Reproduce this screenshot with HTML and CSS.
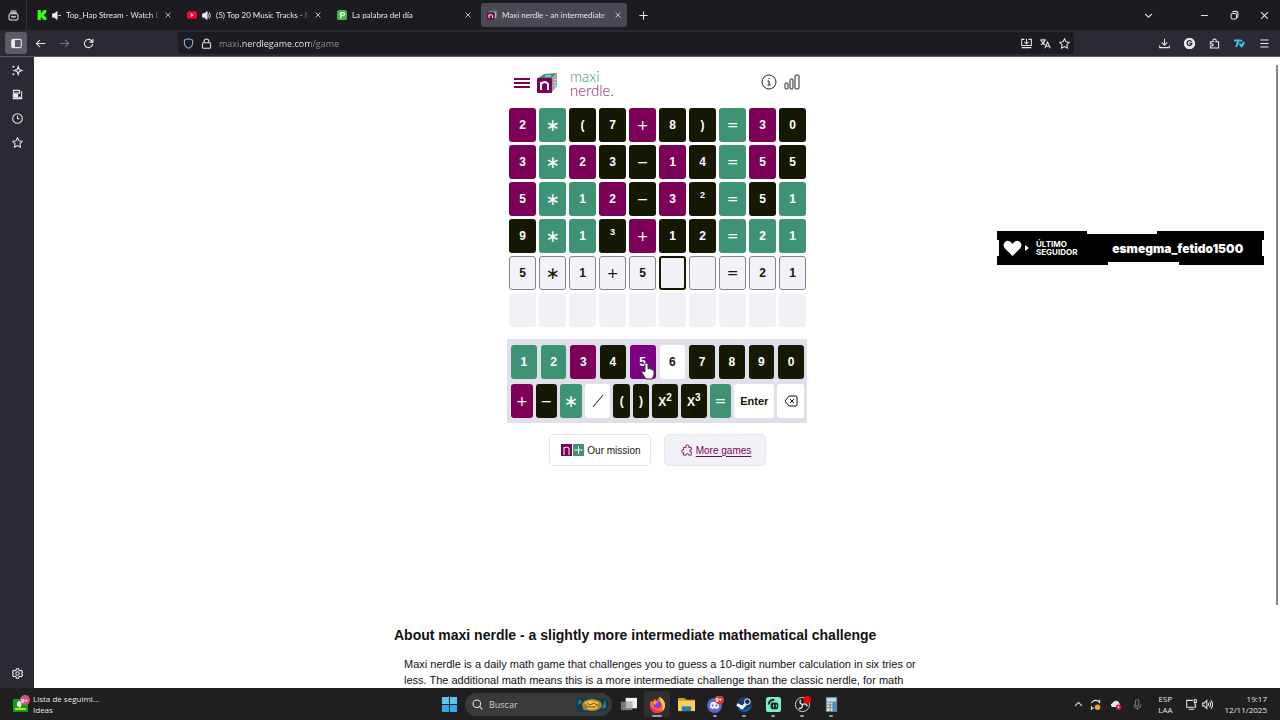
FILE: index.html
```html
<!DOCTYPE html>
<html lang="en">

<head>
    <meta charset="UTF-8">
    <meta name="viewport" content="width=device-width, initial-scale=1.0">
    <title>Maxi nerdle - an intermediate math game</title>
    <link rel="stylesheet" href="styles.css">
</head>

<body>
    <!-- tab strip -->
    <div class="tabbar">
        <button class="icon-btn view-btn" aria-label="Recent browsing">
            <svg class="ico" viewBox="0 0 16 16"><path d="M4 1.500h8M3 4h10" /><rect x="1.500" y="5.500" width="13" height="9" rx="2" /><path d="M5.500 8.500v1.500h5V8.500" /></svg>
        </button>
        <div class="tab">
            <svg class="favicon" viewBox="0 0 16 16"><path fill="#3dfc1a" d="M1 0h5v4h2V2h2V0h5v5h-2v2h-2v2h2v2h2v5h-5v-2H8v-2H6v4H1z" /></svg>
            <svg class="ico sound" viewBox="0 0 16 16"><path class="solid" d="M1 5h3l5-4v14l-5-4H1z" /><path d="M11 8h5" /></svg>
            <span class="tab-title">Top_Hap Stream - Watch Li</span>
            <button class="close" aria-label="Close tab"><svg class="ico" viewBox="0 0 16 16"><path d="M3 3l10 10M13 3L3 13" /></svg></button>
        </div>
        <div class="tab">
            <svg class="favicon" viewBox="0 0 16 16"><rect y="2" width="16" height="12" rx="3" fill="#f03" /><path fill="#fff" d="M6 5l5 3-5 3z" /></svg>
            <svg class="ico sound" viewBox="0 0 16 16"><path class="solid" d="M1 5h3l5-4v14l-5-4H1z" /><path d="M11 5q2 3 0 6M13 2q4 6 0 12" /></svg>
            <span class="tab-title">(5) Top 20 Music Tracks - M</span>
            <button class="close" aria-label="Close tab"><svg class="ico" viewBox="0 0 16 16"><path d="M3 3l10 10M13 3L3 13" /></svg></button>
        </div>
        <div class="tab">
            <svg class="favicon" viewBox="0 0 16 16"><rect width="16" height="16" rx="3" fill="#43b649" /><path d="M6 13V4h3q3 0 3 2.500T9 9H6" fill="none" stroke="#fff" stroke-width="2" /></svg>
            <span class="tab-title">La palabra del día</span>
            <button class="close" aria-label="Close tab"><svg class="ico" viewBox="0 0 16 16"><path d="M3 3l10 10M13 3L3 13" /></svg></button>
        </div>
        <div class="tab active">
            <svg class="favicon" viewBox="0 0 20 20"><path fill="#3f9375" d="M1 5l5-4h13l-4 4z" /><path fill="#a9a9a9" d="M15 5l4-4v13l-4 5z" /><rect y="5" width="15" height="14" rx="1" fill="#7c0058" /><path class="cube-n" d="M4 16V9M4 11q4-4 7 0v5" /></svg>
            <span class="tab-title">Maxi nerdle - an intermediate m</span>
            <button class="close" aria-label="Close tab"><svg class="ico" viewBox="0 0 16 16"><path d="M3 3l10 10M13 3L3 13" /></svg></button>
        </div>
        <button class="icon-btn new-tab" aria-label="New tab"><svg class="ico" viewBox="0 0 16 16"><path d="M8 2v12M2 8h12" /></svg></button>
        <div class="window-btns">
            <button class="icon-btn list-tabs" aria-label="List all tabs"><svg class="ico" viewBox="0 0 16 16"><path d="M3 5.500l5 5 5-5" /></svg></button>
            <button class="icon-btn" aria-label="Minimize"><svg class="ico" viewBox="0 0 16 16"><path d="M3 8h10" /></svg></button>
            <button class="icon-btn" aria-label="Restore"><svg class="ico" viewBox="0 0 16 16"><rect x="3" y="5" width="8" height="8" rx="2" /><path d="M5 3q1-1 3-1h2q3 0 3 3v3q0 2-1 3" /></svg></button>
            <button class="icon-btn" aria-label="Close"><svg class="ico" viewBox="0 0 16 16"><path d="M3 3l10 10M13 3L3 13" /></svg></button>
        </div>
    </div>

    <!-- navigation -->
    <div class="toolbar">
        <button class="icon-btn side-toggle" aria-label="Sidebar"><svg class="ico" viewBox="0 0 16 16"><rect x="1" y="2" width="14" height="12" rx="2" /><path class="solid" d="M2 3h3v10H2z" /></svg></button>
        <button class="icon-btn" aria-label="Back"><svg class="ico" viewBox="0 0 16 16"><path d="M15 8H2M7 3L2 8l5 5" /></svg></button>
        <button class="icon-btn dim" aria-label="Forward"><svg class="ico" viewBox="0 0 16 16"><path d="M1 8h13M9 3l5 5-5 5" /></svg></button>
        <button class="icon-btn" aria-label="Reload"><svg class="ico" viewBox="0 0 16 16"><path d="M14 8.500A6 6 0 1 1 12 3.500L14 6M14.500 1v5h-5" /></svg></button>
        <div class="urlbar">
            <svg class="ico shield" viewBox="0 0 16 16"><path d="M8 1l6 2v4q0 6-6 8-6-2-6-8V3z" /></svg>
            <svg class="ico" viewBox="0 0 16 16"><rect x="2" y="7" width="12" height="8" rx="2" /><path d="M4.500 7V5a3.500 3.500 0 0 1 7 0v2" /></svg>
            <input class="url" type="text" aria-label="Address" value="maxi.nerdlegame.com/game">
            <button class="icon-btn" aria-label="Install page"><svg class="ico" viewBox="0 0 16 16"><path d="M5 2H1v9h14V2h-4M8 1v7M5 5.500l3 3 3-3M1 14h14" /></svg></button>
            <button class="icon-btn" aria-label="Translate"><svg class="ico" viewBox="0 0 16 16"><path d="M0 3h9M4.500 1v2M7 3Q6 8 1 10M2 4q1 4 6 6M7 15l4-9 4 9M8.500 12h5" /></svg></button>
            <button class="icon-btn" aria-label="Bookmark"><svg class="ico" viewBox="0 0 16 16"><path d="M8 1l2.200 4.600 4.800.700-3.500 3.500.900 5L8 12.400 3.600 14.800l.900-5L1 6.300l4.800-.700z" /></svg></button>
        </div>
        <div class="extensions">
            <button class="icon-btn" aria-label="Downloads"><svg class="ico" viewBox="0 0 16 16"><path d="M8 1v9M4 6.500l4 4 4-4M1 11v3h14v-3" /></svg></button>
            <button class="icon-btn" aria-label="Account"><svg class="ico" viewBox="0 0 16 16"><circle class="solid" cx="8" cy="8" r="7.500" /><path class="cut" d="M11 5.500A3.500 3.500 0 1 0 11.500 8H8" /></svg></button>
            <button class="icon-btn" aria-label="Extensions"><svg class="ico" viewBox="0 0 16 16"><path d="M2 14.500v-3q4 .500 4-1.500T2 8.500V5.500h4.500q-2-4 1.500-4t2 4h4v9z" /></svg></button>
            <button class="icon-btn seven" aria-label="7TV"><svg class="ico" viewBox="0 0 16 16"><path d="M0 3.500h7L3 13M8 8l3 4 4-6M9 4h3" /></svg></button>
            <button class="icon-btn" aria-label="Menu"><svg class="ico" viewBox="0 0 16 16"><path d="M2 3h12M2 8h12M2 13h12" /></svg></button>
        </div>
    </div>

    <div class="middle">
        <nav class="sidebar">
            <button class="icon-btn" aria-label="AI chat"><svg class="ico" viewBox="0 0 16 16"><path d="M9 2l1.500 4.500L15 8l-4.500 1.500L9 14 7.500 9.500 3 8l4.500-1.500zM2 1v3M.500 2.500h3M2 12v3M.500 13.500h3" /></svg></button>
            <button class="icon-btn" aria-label="Synced tabs"><svg class="ico" viewBox="0 0 16 16"><path d="M2 2h9v4H2zM13 4h1v8H2V8M1 14h14" /><path class="solid" d="M2 8h6v3H2z" /></svg></button>
            <button class="icon-btn" aria-label="History"><svg class="ico" viewBox="0 0 16 16"><circle cx="8" cy="8" r="7" /><path d="M8 4v4.500h3" /></svg></button>
            <button class="icon-btn" aria-label="Bookmarks"><svg class="ico" viewBox="0 0 16 16"><path d="M8 1l2.200 4.600 4.800.700-3.500 3.500.900 5L8 12.400 3.600 14.800l.900-5L1 6.300l4.800-.700z" /></svg></button>
            <button class="icon-btn settings" aria-label="Settings"><svg class="ico" viewBox="0 0 16 16"><path d="M6.500 1h3l.500 2 2 1 2-.500 1.500 2.500L14 8l1.500 2-1.500 2.500-2-.500-2 1-.500 2h-3L6 13l-2-1-2 .500L.500 10 2 8 .500 6 2 3.500 4 4l2-1z" /><circle cx="8" cy="8" r="2.500" /></svg></button>
        </nav>

        <main class="page">
            <div class="game">
                <header class="game-header">
                    <button class="plain menu" aria-label="Menu"><svg viewBox="0 0 16 12"><path d="M0 2h16M0 6h16M0 10h16" /></svg></button>
                    <svg class="logo" viewBox="0 0 20 20"><path fill="#3f9375" d="M1 5l6-4 13-1-5 5z" /><path fill="#a3a5a0" d="M15 5l5-5v13l-5 6z" /><rect y="5" width="15" height="15" rx="1" fill="#7c0058" /><path class="cube-n" d="M4 17V9M4 11q4-4 7 0v6" /><path d="M8 3h6M17 7l2-1M17 10l2-1M17 13l2-1" stroke="#eee" /></svg>
                    <h1 class="brand"><span class="brand-top">maxi</span><span>nerdle.</span></h1>
                    <button class="plain info" aria-label="How to play"><svg viewBox="0 0 16 16"><circle cx="8" cy="8" r="7" /><path d="M8 7v4M8 4v1M6.500 7H8M6.500 11h3" /></svg></button>
                    <button class="plain stats" aria-label="Statistics"><svg viewBox="0 0 16 16"><rect x="1" y="9" width="3" height="6" rx="1" /><rect x="6" y="5" width="3" height="10" rx="1" /><rect x="11" y="1" width="4" height="14" rx="1" /></svg></button>
                </header>

                <!-- guesses -->
                <div class="board">
                    <div class="cell purple">2</div>
                    <div class="cell green op star">∗</div>
                    <div class="cell black">(</div>
                    <div class="cell black">7</div>
                    <div class="cell purple op">+</div>
                    <div class="cell black">8</div>
                    <div class="cell black">)</div>
                    <div class="cell green op">=</div>
                    <div class="cell purple">3</div>
                    <div class="cell black">0</div>

                    <div class="cell purple">3</div>
                    <div class="cell green op star">∗</div>
                    <div class="cell purple">2</div>
                    <div class="cell black">3</div>
                    <div class="cell black op">−</div>
                    <div class="cell purple">1</div>
                    <div class="cell black">4</div>
                    <div class="cell green op">=</div>
                    <div class="cell purple">5</div>
                    <div class="cell black">5</div>

                    <div class="cell purple">5</div>
                    <div class="cell green op star">∗</div>
                    <div class="cell green">1</div>
                    <div class="cell purple">2</div>
                    <div class="cell black op">−</div>
                    <div class="cell purple">3</div>
                    <div class="cell black power">2</div>
                    <div class="cell green op">=</div>
                    <div class="cell black">5</div>
                    <div class="cell green">1</div>

                    <div class="cell black">9</div>
                    <div class="cell green op star">∗</div>
                    <div class="cell green">1</div>
                    <div class="cell black power">3</div>
                    <div class="cell purple op">+</div>
                    <div class="cell black">1</div>
                    <div class="cell black">2</div>
                    <div class="cell green op">=</div>
                    <div class="cell green">2</div>
                    <div class="cell green">1</div>

                    <div class="cell typed">5</div>
                    <div class="cell typed op star">∗</div>
                    <div class="cell typed">1</div>
                    <div class="cell typed op">+</div>
                    <div class="cell typed">5</div>
                    <div class="cell typed current"></div>
                    <div class="cell typed"></div>
                    <div class="cell typed op">=</div>
                    <div class="cell typed">2</div>
                    <div class="cell typed">1</div>

                    <div class="cell"></div>
                    <div class="cell"></div>
                    <div class="cell"></div>
                    <div class="cell"></div>
                    <div class="cell"></div>
                    <div class="cell"></div>
                    <div class="cell"></div>
                    <div class="cell"></div>
                    <div class="cell"></div>
                    <div class="cell"></div>
                </div>

                <!-- keyboard -->
                <div class="keyboard">
                    <div class="keys digits">
                        <button class="key green">1</button>
                        <button class="key green">2</button>
                        <button class="key purple">3</button>
                        <button class="key black">4</button>
                        <button class="key purple hover">5<svg class="pointer" viewBox="0 0 14 18"><path d="M4 10V2q0-1 1-1t2 1v5q2-1 2 0 2-1 2 1 2-1 2 1v4l-2 4H5L1 11q-1-2 1-2z" /></svg></button>
                        <button class="key">6</button>
                        <button class="key black">7</button>
                        <button class="key black">8</button>
                        <button class="key black">9</button>
                        <button class="key black">0</button>
                    </div>
                    <div class="keys signs">
                        <button class="key purple op">+</button>
                        <button class="key black op">−</button>
                        <button class="key green op star">∗</button>
                        <button class="key" aria-label="/"><svg class="slash" viewBox="0 0 12 14"><path d="M1 13L11 1" /></svg></button>
                        <button class="key black">(</button>
                        <button class="key black">)</button>
                        <button class="key black"><span class="pow">X<sup>2</sup></span></button>
                        <button class="key black"><span class="pow">X<sup>3</sup></span></button>
                        <button class="key green op">=</button>
                        <button class="key enter">Enter</button>
                        <button class="key" aria-label="Delete"><svg class="backspace" viewBox="0 0 14 12"><path d="M5 1h7q1 0 1 1v8q0 1-1 1H5L1 6zM6 4l4 4M10 4L6 8" /></svg></button>
                    </div>
                </div>

                <div class="links">
                    <a href="#" class="link-btn"><svg class="mission" viewBox="0 0 23 12"><path fill="#7c0058" d="M0 0h11v12H0z" /><path fill="#3f9375" d="M12 0h11v12H12z" /><path d="M3 11V3M3 4q3-2 5 0v7M17.500 2v8M13.500 6h8" /></svg>Our mission</a>
                    <a href="#" class="link-btn more"><svg class="puzzle" viewBox="0 0 14 14"><path d="M3 4h3q-1-3 1.500-3T9 4h3v3q-2-1-2 1t2 1v4H9q0-2-1.500-2T6 13H3v-3q-2 1-2-1.500T3 7z" /></svg><span>More games</span></a>
                </div>
            </div>

            <section class="about">
                <h2>About maxi nerdle - a slightly more intermediate mathematical challenge</h2>
                <p>Maxi nerdle is a daily math game that challenges you to guess a 10-digit number calculation in six tries or less. The additional math means this is a more intermediate challenge than the classic nerdle, for math</p>
            </section>

            <!-- stream overlay -->
            <aside class="follower">
                <svg class="heart" viewBox="0 0 20 18"><path d="M10 17L2 9Q-1 5 2 2q4-3 8 2 4-5 8-2 3 3 0 7z" /></svg>
                <span class="arrow"></span>
                <span class="follower-label">ÚLTIMO<br>SEGUIDOR</span>
                <strong class="follower-name">esmegma_fetido1500</strong>
            </aside>
            <div class="scroll-thumb"></div>
        </main>
    </div>

    <!-- windows taskbar -->
    <footer class="taskbar">
        <button class="widget">
            <svg viewBox="0 0 18 18"><path fill="#119c1d" d="M0 4h15v13H0z" /><path fill="#f6fbe9" d="M4 11q-1-5 3-5 3 3 0 7z" /><path fill="#b9e713" d="M2 13h11v2H2z" /><circle cx="12" cy="5" r="5" fill="#d9527c" /><text x="8" y="8">9+</text></svg>
            <span class="widget-text"><b>Lista de seguimi...</b><span>Ideas</span></span>
        </button>
        <div class="apps">
            <button class="app" aria-label="Start"><svg viewBox="0 0 18 18"><path fill="#5cc8f2" d="M1 1h7.500v7.500H1zM9.500 1H17v7.500H9.500z" /><path fill="#35a9e8" d="M1 9.500h7.500V17H1zM9.500 9.500H17V17H9.500z" /></svg></button>
            <label class="search">
                <svg class="ico" viewBox="0 0 16 16"><circle cx="7" cy="7" r="5.500" /><path d="M11 11l4 4" /></svg>
                <input type="text" placeholder="Buscar" aria-label="Buscar">
                <svg class="art" viewBox="0 0 34 17"><path fill="#123c50" d="M3 2h28l3 6-3 8H3L0 8z" /><path fill="#2c8aa0" d="M4 3l3 3-4 3zM30 4l1 7-4 2zM7 13l3-2 1 4z" /><ellipse cx="17" cy="9" rx="10" ry="6" fill="#b48120" /><path fill="#efc544" d="M9 7q7-5 15 0l-3 2 2 3q-7 3-12 0l2-3z" /><path d="M12 7l3 2 4-2 3 2M11 11h10" stroke="#754b12" fill="none" /></svg>
            </label>
            <button class="app" aria-label="Task view"><svg viewBox="0 0 18 18"><path fill="#f1f1f1" d="M6 2h12v11H6z" /><path fill="#777" d="M1 6h12v9H1z" /><path fill="#b8b8b8" d="M6 6h7v7H6z" /></svg></button>
            <button class="app open focused" aria-label="Firefox"><svg viewBox="0 0 18 18"><path fill="#ff6a22" d="M2 5l2 1 2-3 2 2 3-4q6 3 6 9a8 8 0 0 1-16 0q0-3 1-5z" /><path fill="#ffc83a" d="M11 1q6 3 6 9 0 4-3 6 2-7-2-9z" /><path fill="#f42c62" d="M1 9q3 7 12 7-5 4-10 0-2-3-2-7z" /><circle cx="9" cy="9" r="4" fill="#813ce0" /><path fill="#ffb133" d="M5 6q3-1 5 1-4 0-3 3-2-1-2-4z" /></svg></button>
            <button class="app" aria-label="Explorer"><svg viewBox="0 0 18 18"><path fill="#d59b20" d="M0 2h7l2 2h9v12H0z" /><path fill="#fbd052" d="M0 5h18v11H0z" /><path fill="#237fba" d="M4 11h10v5H4z" /></svg></button>
            <button class="app open" aria-label="Discord"><svg viewBox="0 0 18 18"><circle cx="8" cy="10" r="8" fill="#5966df" /><path fill="#fff" d="M4 7q4-2 8 0l1 5-3 2-1-1H7l-1 1-3-2z" /><path fill="#5966df" d="M5 9h2v2H5zM9 9h2v2H9z" /><circle cx="13" cy="4" r="5" fill="#d83a46" /><text x="9" y="6">9+</text></svg></button>
            <button class="app open" aria-label="Steam"><svg viewBox="0 0 18 18"><circle cx="9" cy="9" r="8" fill="#173d6d" /><path fill="#135ca0" d="M2 13q7 3 15-3-2 7-8 7-5 0-7-4z" /><path d="M1 9l6 3 5-5" stroke="#fff" stroke-width="3" fill="none" /><circle cx="12" cy="6" r="3" fill="#183050" stroke="#fff" /><circle cx="6" cy="12" r="2" fill="#fff" /></svg></button>
            <button class="app open" aria-label="Streamlabs"><svg viewBox="0 0 18 18"><rect x="1" y="1" width="16" height="16" rx="3" fill="#7cf0c9" /><path d="M4 9q0-5 6-5" stroke="#122a24" stroke-width="2" fill="none" /><rect x="6" y="7" width="8" height="7" rx="2" fill="#122a24" /><path stroke="#7cf0c9" d="M9 9v3M12 9v3" /></svg></button>
            <button class="app open" aria-label="OBS"><svg viewBox="0 0 18 18"><circle cx="9" cy="9" r="7.500" fill="#222" stroke="#ddd" /><path d="M9 9Q5 8 7 4M9 9q4-2 5 2M9 9q0 5-4 4" stroke="#ddd" stroke-width="1.500" fill="none" /><circle cx="14" cy="4" r="4" fill="#ec0808" /></svg></button>
            <button class="app open" aria-label="Calculator"><svg viewBox="0 0 18 18"><path fill="#6f7f87" d="M3 1h12v16H3z" /><path fill="#a8e6f8" d="M4 2h10v4H4z" /><path fill="#e1e6e8" d="M4 7h3v2H4zM8 7h2v2H8zM4 10h3v2H4zM8 10h2v2H8zM4 13h3v3H4zM8 13h2v3H8z" /><path fill="#329bd8" d="M11 7h3v9h-3z" /></svg></button>
        </div>
        <div class="tray">
            <button class="icon-btn" aria-label="Hidden icons"><svg class="ico" viewBox="0 0 16 16"><path d="M3 10l5-5 5 5" /></svg></button>
            <svg class="ico" viewBox="0 0 16 16"><path d="M2 6q3-6 10-3l2 2V1M2 10v5l2-2h2" /><circle cx="11" cy="12" r="4" fill="#f5a623" stroke="none" /></svg>
            <svg class="ico" viewBox="0 0 16 16"><path class="solid" d="M2 11q-3-3 1-5 3-5 8-1l2 6z" /><circle cx="11" cy="12" r="4" fill="#d9143c" stroke="none" /><path d="M10 11l2 2M12 11l-2 2" /></svg>
            <svg class="ico dim" viewBox="0 0 16 16"><rect x="5" y="1" width="5" height="9" rx="2" /><path d="M3 8q0 5 5 5t5-5M8 13v3" /></svg>
            <span class="lang">ESP<br>LAA</span>
            <svg class="ico net" viewBox="0 0 16 16"><path d="M10 2H1v10h13V8M4 15h8M12 1h3v4h-3zM13 5v4" /></svg>
            <svg class="ico" viewBox="0 0 16 16"><path d="M1 6h2l4-4v12l-4-4H1zM9 6q1 2 0 4M11 4q3 4 0 8M13 2q5 6 0 12" /></svg>
            <span class="clock">19:17<br>12/11/2025</span>
        </div>
    </footer>
</body>

</html>
```

FILE: styles.css
```css
* {
    box-sizing: border-box;
    margin: 0;
    padding: 0;
}

body {
    display: flex;
    flex-direction: column;
    height: 100vh;
    overflow: hidden;
    background: #fff;
    font-family: "Liberation Sans", Arial, sans-serif;
}

button,
input {
    border: 0;
    background: none;
    font: inherit;
    color: inherit;
}

svg {
    display: block;
    flex: none;
}

/* browser chrome */
.tabbar,
.toolbar,
.sidebar,
.taskbar {
    color: #e8e8ee;
    font-family: "Open Sans", "Noto Sans", sans-serif;
    font-size: 9px;
}

.ico {
    width: 11px;
    height: 11px;
    fill: none;
    stroke: currentColor;
    stroke-width: 1.5;
}

.ico .solid {
    fill: currentColor;
}

.ico .cut {
    stroke: #2b2a33;
    stroke-width: 2;
}

.icon-btn {
    display: flex;
    flex: none;
    align-items: center;
    justify-content: center;
    width: 20px;
    height: 20px;
}

.dim {
    color: #777680;
}

.tabbar {
    display: flex;
    align-items: center;
    flex: none;
    gap: 4px;
    height: 30px;
    padding-right: 6px;
    background: #1c1b22;
}

.view-btn {
    width: 27px;
    height: 30px;
    border-right: 1px solid #34333d;
}

.tab {
    display: flex;
    align-items: center;
    gap: 5px;
    width: 146px;
    height: 24px;
    padding: 0 5px 0 6px;
    border-radius: 3px;
}

.tab.active {
    background: #4a4953;
}

.favicon {
    flex: none;
    width: 10px;
    height: 10px;
}

.sound {
    width: 9px;
    height: 9px;
}

.tab-title {
    flex: 1;
    overflow: hidden;
    white-space: nowrap;
    font-family: Lato, "Open Sans", sans-serif;
    font-size: 8px;
    line-height: 14px;
    -webkit-mask-image: linear-gradient(to left, transparent, #000 8px);
    mask-image: linear-gradient(to left, transparent, #000 8px);
}

.close .ico {
    width: 8px;
    height: 8px;
}

.new-tab {
    margin-left: 2px;
}

.window-btns {
    display: flex;
    gap: 10px;
    margin-left: auto;
}

.list-tabs {
    margin-right: 26px;
}

.toolbar {
    display: flex;
    align-items: center;
    flex: none;
    gap: 4px;
    height: 27px;
    padding: 0 6px 0 5px;
    background: #2b2a33;
    border-bottom: 1px solid #5a5960;
}

.side-toggle {
    width: 22px;
    height: 22px;
    margin-right: -1px;
    border-radius: 3px;
    background: #5b5a65;
}

.urlbar {
    display: flex;
    align-items: center;
    flex: 1;
    gap: 7px;
    height: 22px;
    margin: 0 76px;
    padding: 0 0 0 5px;
    border-radius: 3px;
    background: #1c1b22;
}

.urlbar .icon-btn {
    width: 12px;
}

.urlbar .icon-btn:last-child {
    margin-right: 4px;
}

.shield {
    color: #8fb3d9;
}

/* host name brighter than the rest of the address */
.url {
    flex: 1;
    min-width: 0;
    background: linear-gradient(to right, #94939c 21px, #f4f4f8 21px, #f4f4f8 91px, #94939c 91px);
    -webkit-background-clip: text;
    background-clip: text;
    color: transparent;
}

.extensions {
    display: flex;
    gap: 5px;
}

.seven {
    color: #3cc4ee;
}

.seven .ico {
    stroke-width: 3;
}

.middle {
    display: flex;
    flex: 1;
    min-height: 0;
}

.sidebar {
    display: flex;
    flex-direction: column;
    align-items: center;
    flex: none;
    gap: 4px;
    width: 34px;
    padding: 3px 0 5px;
    background: #2b2a33;
}

.settings {
    margin-top: auto;
}

/* game page */
.page {
    position: relative;
    flex: 1;
    overflow: hidden;
}

.game {
    width: 300px;
    margin: 0 auto;
}

.game-header {
    display: flex;
    align-items: center;
    height: 51px;
    padding: 0 7px;
}

.plain svg {
    width: 16px;
    height: 16px;
    fill: none;
    stroke: #222;
    stroke-width: 1;
}

.menu svg {
    height: 12px;
    stroke: #7c0058;
    stroke-width: 2;
}

.logo {
    width: 20px;
    height: 20px;
    margin: 0 13px 0 7px;
}

.cube-n {
    fill: none;
    stroke: #fff;
    stroke-width: 2;
}

.brand {
    color: #8b1b69;
    font-family: Lato, sans-serif;
    font-size: 15px;
    font-weight: 300;
    line-height: 14px;
}

.brand span {
    display: block;
}

.brand .brand-top {
    color: #3f9375;
}

.info {
    margin: 0 7px 0 auto;
}

.info,
.stats {
    padding-bottom: 2px;
}

.board {
    display: grid;
    grid-template-columns: repeat(10, 1fr);
    grid-auto-rows: 34px;
    gap: 3px;
    padding: 0 1px 0 2px;
}

.cell,
.key {
    display: flex;
    align-items: center;
    justify-content: center;
    border-radius: 3px;
    color: #161803;
    font-size: 12px;
    font-weight: 700;
}

.cell {
    padding-bottom: 1px;
    background: #f1f2f6;
}

.key {
    position: relative;
    height: 34px;
    background: #fff;
}

.green {
    background: #3f9375;
    color: #fff;
}

.purple {
    background: #7c0058;
    color: #fff;
}

.black {
    background: #161803;
    color: #fff;
}

.op {
    font-family: "DejaVu Sans", sans-serif;
    font-size: 14px;
    font-weight: 400;
    line-height: 14px;
}

.star {
    font-size: 17px;
}

.power {
    padding-bottom: 8px;
    font-size: 9px;
}

.typed {
    border: 1px solid #85868c;
    background: #f1f3f9;
}

.current {
    border: 2px solid #161803;
}

.keyboard {
    display: flex;
    flex-direction: column;
    gap: 5px;
    margin-top: 12px;
    padding: 6px 3px 5px 4px;
    background: #dfe0ea;
}

.keys {
    display: grid;
    gap: 4px;
}

.digits {
    grid-template-columns: repeat(10, 1fr);
}

.signs {
    grid-template-columns: 21fr 21fr 21fr 25fr 16fr 16fr 25fr 25fr 21fr 39fr 26fr;
    gap: 3px;
}

.hover {
    background: #7b0083;
}

.pointer {
    position: absolute;
    left: 11px;
    top: 17px;
    width: 14px;
    height: 18px;
    z-index: 1;
    fill: #fff;
    stroke: #333;
}

.slash {
    width: 12px;
    height: 14px;
    stroke: #161803;
}

.pow sup {
    font-size: 10px;
    line-height: 10px;
}

.enter {
    font-size: 11px;
}

.backspace {
    width: 14px;
    height: 12px;
    fill: none;
    stroke: #161803;
}

.links {
    display: flex;
    justify-content: center;
    gap: 13px;
    margin-top: 11px;
}

.link-btn {
    display: flex;
    align-items: center;
    justify-content: center;
    gap: 3px;
    width: 102px;
    height: 32px;
    padding-left: 3px;
    border: 1px solid #e6e7ec;
    border-radius: 5px;
    color: #161803;
    font-size: 10px;
    text-decoration: none;
}

.more {
    background: #f1f2f8;
    color: #7c0058;
}

.more span {
    text-decoration: underline;
    text-underline-offset: 2px;
}

.mission {
    width: 23px;
    height: 12px;
    fill: none;
    stroke: #fff;
}

.mission path[fill] {
    stroke: none;
}

.puzzle {
    width: 12px;
    height: 12px;
    fill: none;
    stroke: #7c0058;
}

.about {
    max-width: 526px;
    margin: 159px auto 0;
    color: #111;
}

.about h2 {
    font-size: 14px;
    line-height: 20px;
}

.about p {
    margin: 11px 0 0 10px;
    font-size: 11px;
    line-height: 16px;
}

/* sits on top of the whole page */
.follower {
    position: absolute;
    right: 16px;
    top: 174px;
    display: flex;
    align-items: center;
    width: 267px;
    height: 34px;
    padding: 0 6px;
    background: #000;
    color: #fff;
    font-family: Inter, sans-serif;
    clip-path: polygon(0 0, 90px 0, 90px 3px, 160px 3px, 160px 0, 100% 0, 100% 9px, 265px 9px, 265px 25px, 100% 25px, 100% 100%, 182px 100%, 182px 31px, 111px 31px, 111px 100%, 0 100%, 0 25px, 2px 25px, 2px 9px, 0 9px);
}

.heart {
    width: 19px;
    height: 17px;
    fill: #fff;
}

.arrow {
    margin: 0 7px 0 3px;
    border: 3px solid transparent;
    border-left: 4px solid #fff;
    border-right: 0;
}

.follower-label {
    font-size: 8px;
    font-weight: 700;
    line-height: 8px;
}

.follower-name {
    flex: 1;
    padding-left: 20px;
    font-size: 12px;
    font-weight: 900;
    text-align: center;
}

.scroll-thumb {
    position: absolute;
    top: 8px;
    right: 2px;
    width: 2px;
    height: 540px;
    background: #85858a;
}

/* taskbar */
.taskbar {
    display: grid;
    grid-template-columns: 1fr auto 1fr;
    align-items: center;
    flex: none;
    height: 32px;
    background: #1f1f1f;
}

.widget {
    display: flex;
    align-items: center;
    gap: 2px;
    padding-left: 13px;
    text-align: left;
}

.widget svg {
    width: 18px;
    height: 18px;
}

.taskbar text {
    fill: #fff;
    font-size: 6px;
    font-weight: 700;
}

.widget-text {
    font-size: 8px;
    line-height: 11px;
}

.widget-text b,
.widget-text span {
    display: block;
    font-weight: 400;
}

.apps {
    display: flex;
    align-items: center;
    gap: 3px;
}

.app {
    display: flex;
    flex-direction: column;
    align-items: center;
    justify-content: center;
    width: 26px;
    height: 26px;
    border-radius: 3px;
}

.app svg {
    width: 17px;
    height: 17px;
}

.open::after {
    content: "";
    width: 4px;
    height: 2px;
    margin-top: 2px;
    border-radius: 1px;
    background: #9c9c9c;
}

.open {
    padding-top: 4px;
}

.focused {
    background: #303030;
}

.focused::after {
    width: 10px;
}

.search {
    display: flex;
    align-items: center;
    gap: 6px;
    width: 147px;
    height: 23px;
    padding: 0 3px 0 7px;
    border-radius: 12px;
    background: #3a3a3a;
}

.search input {
    flex: 1;
    min-width: 0;
}

.search input::placeholder {
    color: #d0d0d0;
}

.art {
    width: 34px;
    height: 17px;
}

.tray {
    display: flex;
    align-items: center;
    justify-content: flex-end;
    gap: 10px;
    padding-right: 13px;
    font-size: 8px;
    line-height: 11px;
}

.tray .icon-btn {
    width: 12px;
    margin-right: -4px;
}

.tray .dim {
    margin-right: 2px;
}

.lang {
    margin: 0 3px;
    text-align: center;
}

.net {
    margin-right: -5px;
}

.clock {
    margin-left: 2px;
    text-align: right;
}
```
